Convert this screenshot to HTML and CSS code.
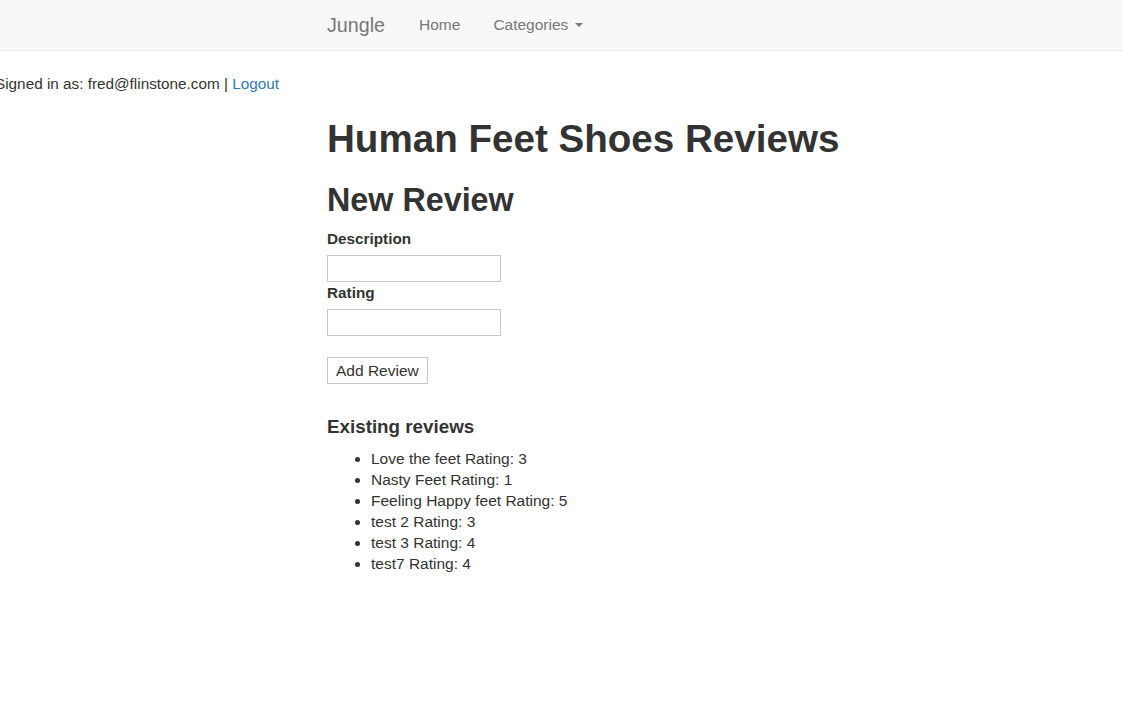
FILE: index.html
```html
<!DOCTYPE html>
<html>
<head>
<meta charset="utf-8">
<link rel="stylesheet" href="styles.css">
</head>
<body>
<nav class="navbar">
  <div class="nav-inner">
    <a class="brand" href="#">Jungle</a>
    <a class="nav-link home" href="#">Home</a>
    <a class="nav-link" href="#">Categories <span class="caret"></span></a>
  </div>
</nav>
<div class="signed">
  <span class="signed-text">Signed in as: fred@flinstone.com | <a href="#" class="logout">Logout</a></span>
</div>
<main class="content">
  <h1 class="title">Human Feet Shoes Reviews</h1>
  <h2 class="subtitle">New Review</h2>
  <form class="review-form">
    <label class="label">Description</label>
    <input class="field" type="text">
    <label class="label label-rating">Rating</label>
    <input class="field" type="text">
    <button class="btn" type="button">Add Review</button>
  </form>
  <h4 class="existing">Existing reviews</h4>
  <ul class="reviews">
    <li>Love the feet Rating: 3</li>
    <li>Nasty Feet Rating: 1</li>
    <li>Feeling Happy feet Rating: 5</li>
    <li>test 2 Rating: 3</li>
    <li>test 3 Rating: 4</li>
    <li>test7 Rating: 4</li>
  </ul>
</main>
</body>
</html>
```
FILE: styles.css
```css
html, body {
  margin: 0;
  padding: 0;
}
body {
  font-family: "Liberation Sans", Arial, sans-serif;
  font-size: 15.5px;
  line-height: 20px;
  color: #333;
  background: #fff;
  overflow: hidden;
}
a {
  text-decoration: none;
}
.navbar {
  height: 50px;
  background: #f8f8f8;
  border-bottom: 1px solid #e7e7e7;
}
.nav-inner {
  display: flex;
  align-items: center;
  height: 50px;
  padding-left: 327px;
}
.brand {
  font-size: 19.7px;
  line-height: 20px;
  color: #777;
  margin-right: 34px;
}
.nav-link {
  color: #777;
  font-size: 15.5px;
  line-height: 20px;
  display: flex;
  align-items: center;
}
.home {
  margin-right: 33px;
}
.caret {
  display: inline-block;
  width: 0;
  height: 0;
  margin-left: 7px;
  border-top: 4px solid #777;
  border-left: 4px solid transparent;
  border-right: 4px solid transparent;
}
.signed {
  margin-top: 23px;
  width: 279px;
  display: flex;
  justify-content: flex-end;
  white-space: nowrap;
  font-size: 15.3px;
}
.logout {
  color: #337ab7;
}
.content {
  padding-left: 327px;
}
.title {
  font-size: 38.6px;
  font-weight: bold;
  line-height: 40px;
  margin: 25px 0 0 0;
}
.subtitle {
  font-size: 32.3px;
  font-weight: bold;
  line-height: 33px;
  margin: 25px 0 0 0;
}
.review-form {
  display: flex;
  flex-direction: column;
  align-items: flex-start;
  margin-top: 12px;
}
.label {
  font-weight: bold;
  line-height: 20px;
  font-size: 15.3px;
}
.label-rating {
  margin-top: 1px;
}
.field {
  box-sizing: border-box;
  width: 174px;
  height: 27px;
  margin: 6px 0 0 0;
  border: 1px solid #c8c8c8;
  padding: 2px 4px;
  font: inherit;
}
.btn {
  margin-top: 21px;
  box-sizing: border-box;
  height: 27px;
  padding: 0 8px;
  background: #fff;
  border: 1px solid #c8c8c8;
  font: inherit;
  color: #333;
  line-height: 25px;
}
.existing {
  font-size: 18.8px;
  font-weight: bold;
  line-height: 20px;
  margin: 33px 0 0 0;
}
.reviews {
  margin: 11px 0 0 0;
  padding-left: 44px;
  line-height: 21px;
}
```
